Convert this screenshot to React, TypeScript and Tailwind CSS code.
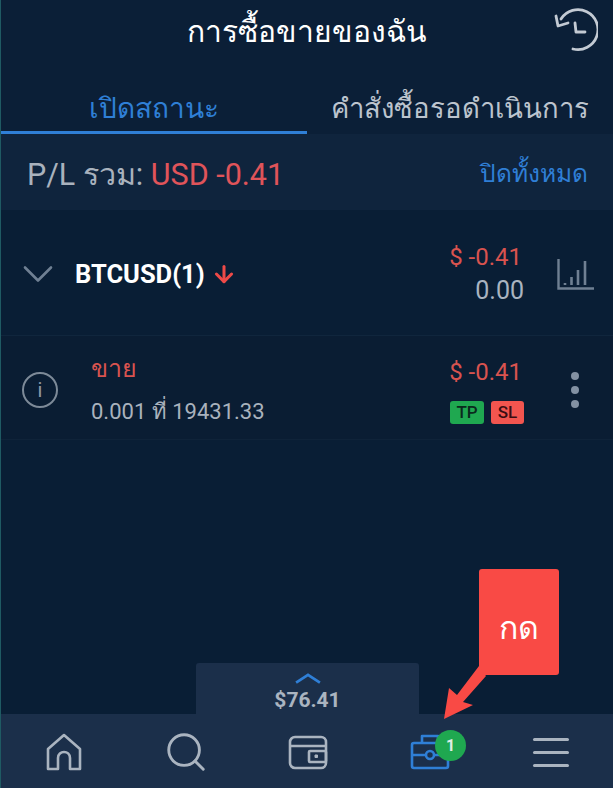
import { ChevronDown, Search, ArrowDown } from "lucide-react";

function HistoryIcon() {
  return (
    <svg width="44" height="44" viewBox="0 0 44 44" fill="none" stroke="#c3cad3" strokeWidth="2.8" strokeLinecap="round" strokeLinejoin="round">
      <path d="M7 11 A20 20 0 1 1 19 41" />
      <path d="M2 8 L4 18 L14 15" />
      <path d="M21 15 L22 24 H31" />
    </svg>
  );
}

function BarsIcon() {
  return (
    <svg width="37" height="31" viewBox="0 0 37 31" fill="none" stroke="#6f8093" strokeWidth="2">
      <path d="M1.5 0 V29.5 H37" strokeWidth="2.4" />
      <path d="M8 24 V26 M14.5 18 V26 M21 11 V26 M28 2 V26" strokeWidth="2.6" />
    </svg>
  );
}

function HomeIcon() {
  return (
    <svg width="38" height="38" viewBox="0 0 38 38" fill="none" stroke="#aab4c0" strokeWidth="2.6" strokeLinejoin="round">
      <path d="M3 16 L19 2 L35 16 V36 H25 V25 C25 21 22 19 19 19 C16 19 13 21 13 25 V36 H3 Z" />
    </svg>
  );
}

function WalletIcon() {
  return (
    <svg width="40" height="35" viewBox="0 0 40 35" fill="none" stroke="#aab4c0" strokeWidth="2.6" strokeLinejoin="round">
      <rect x="2" y="2" width="36" height="31" rx="5" />
      <path d="M2 11 H38" />
      <rect x="21" y="16" width="17" height="11" rx="1" />
      <rect x="27" y="20" width="2.5" height="2.5" fill="#aab4c0" strokeWidth="1" />
    </svg>
  );
}

function BriefcaseIcon() {
  return (
    <svg width="40" height="36" viewBox="0 0 40 36" fill="none" stroke="#2f7fd6" strokeWidth="2.6" strokeLinejoin="round">
      <rect x="2" y="9" width="36" height="25" rx="2" />
      <path d="M12 9 V2 H28 V9" />
      <path d="M2 21 H16 M24 21 H38" />
      <circle cx="20" cy="21" r="4" />
    </svg>
  );
}

function Callout() {
  return (
    <div className="absolute left-[436px] top-[569px]">
      <div className="absolute left-[42px] top-0 flex h-[106px] w-[80px] items-center justify-center rounded-[3px] bg-[#f94a45] pt-[12px] text-[32px] text-white">
        กด
      </div>
      <svg width="70" height="90" viewBox="0 0 70 90" className="absolute left-0 top-[68px]" fill="#f94a45">
        <path d="M42 29 L49 39 L26 65 L36 68 L7 82 L12 51 L20 58 Z" />
      </svg>
    </div>
  );
}

export default function App() {
  return (
    <div
      className="relative flex h-[788px] w-[613px] flex-col overflow-hidden border-l border-l-[#1f5a63] bg-[#091e35]"
      style={{ fontFamily: "Roboto, 'Noto Sans', sans-serif" }}
    >
      {/* Header */}
      <div className="relative flex h-[62px] items-center justify-center bg-[#0b1f37]">
        <h1 className="pt-[2px] text-[30px] font-medium leading-none text-white">การซื้อขายของฉัน</h1>
        <div className="absolute right-[15px] top-[8px]">
          <HistoryIcon />
        </div>
      </div>

      {/* Tabs */}
      <div className="flex h-[72px] bg-[#0b1f37]">
        <div className="flex w-[306px] items-center justify-center border-b-[3px] border-[#2f7fd6] pt-[24px] text-[28px] text-[#2f7fd6]">
          เปิดสถานะ
        </div>
        <div className="flex flex-1 items-center justify-center border-b-[3px] border-transparent pt-[24px] text-[27.5px] text-[#bcc4ce]">
          คำสั่งซื้อรอดำเนินการ
        </div>
      </div>

      {/* Total P/L */}
      <div className="flex h-[76px] items-center justify-between bg-[#0f243d] pl-[26px] pr-[25px] pt-[5px]">
        <div className="text-[30.5px] text-[#a9b2bd]">
          P/L รวม: <span className="text-[#e0545a]">USD -0.41</span>
        </div>
        <div className="text-[24.5px] text-[#2f7fd6]">ปิดทั้งหมด</div>
      </div>

      {/* Symbol row */}
      <div className="flex h-[126px] items-center border-b border-[#10263d] pl-[11px] pr-[19px] pt-[3px]">
        <ChevronDown size={52} strokeWidth={1.2} className="text-[#6f8093]" />
        <span className="ml-[11px] text-[25.5px] font-bold text-white">BTCUSD(1)</span>
        <ArrowDown size={26} strokeWidth={2.8} className="ml-[6px] text-[#ee4a48]" />
        <div className="ml-auto text-right">
          <div className="pr-[2px] text-[24px] leading-[34px] text-[#d9534f]">$ -0.41</div>
          <div className="text-[25px] leading-[34px] text-[#aab4c0]">0.00</div>
        </div>
        <div className="ml-[33px]">
          <BarsIcon />
        </div>
      </div>

      {/* Position row */}
      <div className="flex h-[104px] items-center border-b border-[#0f2339] bg-[#0a1d33] pl-[21px] pr-[34px] pt-[4px]">
        <div className="flex h-[36px] w-[36px] items-center justify-center rounded-full border-[2.5px] border-[#7d8a98] text-[20px] text-[#8d99a6]">
          i
        </div>
        <div className="ml-[33px] pt-[6px]">
          <div className="text-[25px] leading-[38px] text-[#d9534f]">ขาย</div>
          <div className="text-[22px] leading-[48px] text-[#a9b2bd]">0.001 ที่ 19431.33</div>
        </div>
        <div className="ml-auto flex flex-col items-end gap-[12px]">
          <div className="pr-[2px] text-[24px] leading-[34px] text-[#d9534f]">$ -0.41</div>
          <div className="flex gap-[7px] text-[17px] font-medium leading-none">
            <span className="flex h-[23px] w-[34px] items-center justify-center rounded-[3px] bg-[#1fa850] text-[#0a2a1d]">TP</span>
            <span className="flex h-[23px] w-[33px] items-center justify-center rounded-[3px] bg-[#f2554f] text-[#3a0d12]">SL</span>
          </div>
        </div>
        <div className="ml-[47px] flex flex-col gap-[6px]">
          <span className="h-[8px] w-[8px] rounded-full bg-[#8391a3]" />
          <span className="h-[8px] w-[8px] rounded-full bg-[#8391a3]" />
          <span className="h-[8px] w-[8px] rounded-full bg-[#8391a3]" />
        </div>
      </div>

      <div className="flex-1" />

      {/* Balance tab */}
      <div className="ml-[195px] flex h-[51px] w-[223px] flex-col items-center rounded-t-[3px] bg-[#1b2f4a] pt-[10px]">
        <svg width="28" height="12" viewBox="0 0 28 12" fill="none" stroke="#2f7fd6" strokeWidth="3">
          <path d="M1 10.5 L14 2 L27 10.5" />
        </svg>
        <span className="mt-[2px] text-[21px] font-bold leading-[28px] text-[#aab4c0]">$76.41</span>
      </div>

      {/* Bottom nav */}
      <div className="flex h-[74px] items-center bg-[#1b2f4a] pt-[2px]">
        <div className="flex w-[126px] justify-center"><HomeIcon /></div>
        <div className="flex w-[118px] justify-center"><Search size={46} strokeWidth={1.5} className="text-[#aab4c0]" /></div>
        <div className="flex w-[126px] justify-center"><WalletIcon /></div>
        <div className="flex w-[118px] justify-center">
          <div className="relative">
            <BriefcaseIcon />
            <span className="absolute -right-[16px] -top-[4px] flex h-[31px] w-[31px] items-center justify-center rounded-full bg-[#1fa850] text-[16px] font-bold text-[#dfeee4]">1</span>
          </div>
        </div>
        <div className="flex flex-1 justify-center">
          <div className="flex flex-col gap-[10px]">
            <span className="h-[3px] w-[36px] rounded-full bg-[#aab4c0]" />
            <span className="h-[3px] w-[36px] rounded-full bg-[#aab4c0]" />
            <span className="h-[3px] w-[36px] rounded-full bg-[#aab4c0]" />
          </div>
        </div>
      </div>

      <Callout />
    </div>
  );
}
